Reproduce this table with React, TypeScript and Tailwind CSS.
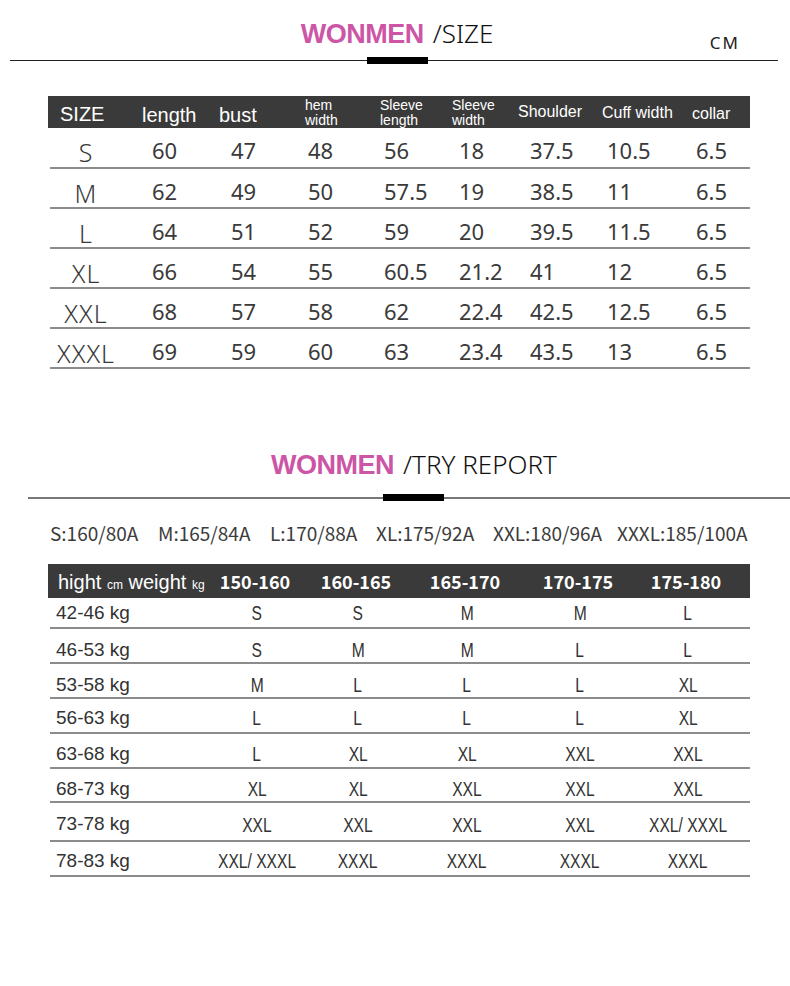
import React from 'react';

const arial = "font-['Liberation_Sans',Arial,sans-serif]";
const light = "font-['Noto_Sans','Liberation_Sans',sans-serif]";
const cjk = "font-['Noto_Sans_CJK_SC','Noto_Sans',sans-serif]";

// column widths for the size chart (starts at 48px)
const sizeCols = 'grid grid-cols-[92px_77px_86px_75px_72px_66px_84px_90px_58px]';
const valuePad = ['pl-[10px]', 'pl-[12px]', 'pl-[3px]', 'pl-[4px]', 'pl-[7px]', 'pl-[12px]', 'pl-[5px]', 'pl-[4px]'];

const sizeRows: [string, string[]][] = [
  ['S', ['60', '47', '48', '56', '18', '37.5', '10.5', '6.5']],
  ['M', ['62', '49', '50', '57.5', '19', '38.5', '11', '6.5']],
  ['L', ['64', '51', '52', '59', '20', '39.5', '11.5', '6.5']],
  ['XL', ['66', '54', '55', '60.5', '21.2', '41', '12', '6.5']],
  ['XXL', ['68', '57', '58', '62', '22.4', '42.5', '12.5', '6.5']],
  ['XXXL', ['69', '59', '60', '63', '23.4', '43.5', '13', '6.5']],
];

const tryCols = 'grid grid-cols-[157px_100px_102px_116px_110px_106px]';
const heights = ['150-160', '160-165', '165-170', '170-175', '175-180'];
const tryRows: [string, string[], string][] = [
  ['42-46 kg', ['S', 'S', 'M', 'M', 'L'], 'h-[31px]'],
  ['46-53 kg', ['S', 'M', 'M', 'L', 'L'], 'h-[35px] pt-[6px]'],
  ['53-58 kg', ['M', 'L', 'L', 'L', 'XL'], 'h-[35px] pt-[6px]'],
  ['56-63 kg', ['L', 'L', 'L', 'L', 'XL'], 'h-[35px] pt-[4px]'],
  ['63-68 kg', ['L', 'XL', 'XL', 'XXL', 'XXL'], 'h-[35px] pt-[5px]'],
  ['68-73 kg', ['XL', 'XL', 'XXL', 'XXL', 'XXL'], 'h-[34px] pt-[5px]'],
  ['73-78 kg', ['XXL', 'XXL', 'XXL', 'XXL', 'XXL/ XXXL'], 'h-[39px] pt-[6px]'],
  ['78-83 kg', ['XXL/ XXXL', 'XXXL', 'XXXL', 'XXXL', 'XXXL'], 'h-[35px] pt-[4px]'],
];

const codes: [string, string][] = [
  ['S:160/80A', 'w-[108px]'],
  ['M:165/84A', 'w-[112px]'],
  ['L:170/88A', 'w-[106px]'],
  ['XL:175/92A', 'w-[117px]'],
  ['XXL:180/96A', 'w-[124px]'],
  ['XXXL:185/100A', 'w-[130px]'],
];

function Title({ sub }: { sub: string }) {
  return (
    <div className="flex items-baseline gap-[9px] leading-none">
      <span className={`${arial} text-[27px] font-bold text-[#cc55a6] tracking-[-0.5px]`}>WONMEN</span>
      <span className={`${light} text-[26px] font-light text-[#111]`}>{sub}</span>
    </div>
  );
}

function SizeChart() {
  return (
    <div className="ml-[48px] w-[702px]">
      <div className={`${sizeCols} h-[32px] bg-[#3a3a3a] text-white ${arial} items-center`}>
        <span className="pl-[12px] text-[20px] pt-[2px]">SIZE</span>
        <span className="pl-[2px] text-[20px] pt-[4px]">length</span>
        <span className="pl-[2px] text-[20px] pt-[4px]">bust</span>
        <span className="pl-[2px] text-[14px] leading-[15px]">hem<br />width</span>
        <span className="pl-[2px] text-[14px] leading-[15px]">Sleeve<br />length</span>
        <span className="pl-[2px] text-[14px] leading-[15px]">Sleeve<br />width</span>
        <span className="pl-[2px] text-[16px] -mt-[3px]">Shoulder</span>
        <span className="pl-[2px] text-[16px] -mt-[1px]">Cuff width</span>
        <span className="pl-[2px] text-[16px] pt-[1px]">collar</span>
      </div>
      {sizeRows.map(([size, vals], i) => (
        <div
          key={size}
          className={`${sizeCols} ${i === 0 ? 'h-[41px]' : 'h-[40px]'} ml-[2px] items-center pt-[2px] border-b-2 border-[#8c8c8c] text-[#3a3a3a] ${light}`}
        >
          <span className="w-[72px] text-center text-[25px] font-light tracking-[1px] pt-[4px]">{size}</span>
          {vals.map((v, j) => (
            <span key={j} className={`${valuePad[j]} text-[22px]`}>{v}</span>
          ))}
        </div>
      ))}
    </div>
  );
}

function TryChart() {
  return (
    <div className="ml-[48px] w-[702px]">
      <div className={`${tryCols} h-[34px] bg-[#3a3a3a] text-white items-center`}>
        <span className={`${arial} pl-[10px] text-[20px] whitespace-nowrap pt-[1px]`}>
          hight <span className="text-[12px]">cm</span> weight <span className="text-[12px]">kg</span>
        </span>
        {heights.map((h) => (
          <span key={h} className={`${cjk} text-center text-[18px] font-bold`}>
            {h}
          </span>
        ))}
      </div>
      {tryRows.map(([w, vals, h]) => (
        <div key={w} className={`${tryCols} ${h} ml-[2px] w-[700px] items-center border-b-2 border-[#8c8c8c] text-[#333]`}>
          <span className={`${arial} pl-[6px] text-[19px]`}>{w}</span>
          {vals.map((v, j) => (
            <span key={j} className="text-center">
              <span className={`${arial} inline-block scale-x-[0.78] text-[20px] whitespace-nowrap`}>{v}</span>
            </span>
          ))}
        </div>
      ))}
    </div>
  );
}

export default function App() {
  return (
    <div className="w-[790px] h-[986px] bg-white overflow-hidden">
      {/* size section */}
      <div className="pt-[15px] h-[51px] grid grid-cols-[1fr_auto_1fr] items-center">
        <div />
        <div className="ml-[4px] mt-[2px]">
          <Title sub="/SIZE" />
        </div>
        <div className="flex justify-end self-end pr-[50px]">
          <span className={`${light} text-[17px] tracking-[2px] text-[#222] leading-none`}>CM</span>
        </div>
      </div>
      <div className="mt-[6px] ml-[10px] w-[768px] flex items-center h-[7px]">
        <div className="w-[357px] h-[1.5px] bg-[#222]" />
        <div className="w-[61px] h-[7px] bg-black" />
        <div className="flex-1 h-[1.5px] bg-[#222]" />
      </div>
      <div className="mt-[32px]">
        <SizeChart />
      </div>

      {/* try report section */}
      <div className="mt-[78px] h-[36px] flex items-center justify-center pl-[38px]">
        <Title sub="/TRY REPORT" />
      </div>
      <div className="mt-[11px] ml-[28px] flex items-center h-[7px]">
        <div className="w-[355px] h-[2px] bg-[#777]" />
        <div className="w-[61px] h-[7px] bg-black" />
        <div className="flex-1 h-[2px] bg-[#777]" />
      </div>
      <div className="mt-[24px] ml-[50px] flex h-[20px] items-center text-[#3c3c3c]">
        {codes.map(([c, w]) => (
          <div key={c} className={w}>
            <span className={`${cjk} text-[19px] whitespace-nowrap leading-none`}>{c}</span>
          </div>
        ))}
      </div>
      <div className="mt-[19px]">
        <TryChart />
      </div>
    </div>
  );
}
